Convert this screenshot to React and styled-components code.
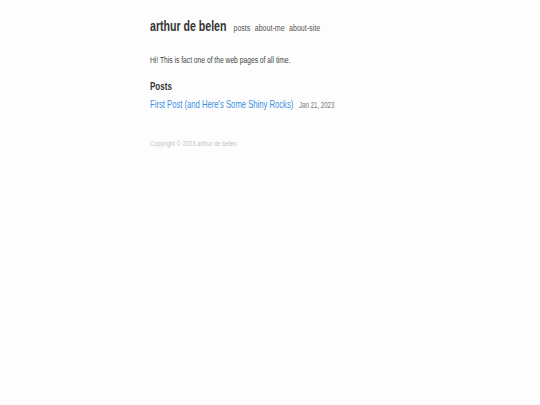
import styled, { createGlobalStyle } from "styled-components";

const GlobalStyle = createGlobalStyle`
  html, body {
    margin: 0;
    padding: 0;
    background: #fdfdfd;
  }
  body {
    font-family: "Liberation Sans", Arial, sans-serif;
    color: #333;
  }
`;

// narrow column, the site's font is a condensed sans
const Page = styled.div`
  width: 240px;
  margin: 0 auto;
  padding-top: 17px;
`;

const Condensed = styled.div`
  width: 328px;
  transform: scaleX(0.73);
  transform-origin: 0 0;
`;

const Header = styled.header`
  display: flex;
  align-items: baseline;
  gap: 9.6px;
  line-height: 18px;
`;

const SiteTitle = styled.a`
  font-size: 14.5px;
  font-weight: 700;
  color: #333;
  text-decoration: none;
  white-space: nowrap;
`;

const Nav = styled.nav`
  display: flex;
  gap: 6px;
`;

const NavLink = styled.a`
  font-size: 9.7px;
  color: #555;
  text-decoration: none;
  white-space: nowrap;
`;

const Intro = styled.p`
  font-size: 9.2px;
  line-height: 12px;
  margin: 17px 0 0;
  color: #444;
`;

const SectionTitle = styled.h2`
  font-size: 11px;
  line-height: 14px;
  font-weight: 700;
  margin: 13px 0 0;
  color: #333;
`;

const PostRow = styled.div`
  display: flex;
  align-items: baseline;
  gap: 8.2px;
  margin-top: 4px;
  line-height: 14px;
  white-space: nowrap;
`;

const PostLink = styled.a`
  font-size: 10.5px;
  color: #3a8ee6;
  text-decoration: none;
`;

const PostDate = styled.span`
  font-size: 8.3px;
  color: #777;
`;

const Footer = styled.footer`
  font-size: 8px;
  line-height: 10px;
  color: #c2c2c2;
  margin-top: 27px;
`;

export default function App() {
  return (
    <>
      <GlobalStyle />
      <Page>
        <Condensed>
          <Header>
            <SiteTitle href="#">arthur de belen</SiteTitle>
            <Nav>
              <NavLink href="#">posts</NavLink>
              <NavLink href="#">about-me</NavLink>
              <NavLink href="#">about-site</NavLink>
            </Nav>
          </Header>
          <Intro>Hi! This is fact one of the web pages of all time.</Intro>
          <SectionTitle>Posts</SectionTitle>
          <PostRow>
            <PostLink href="#">First Post (and Here's Some Shiny Rocks)</PostLink>
            <PostDate>Jan 21, 2023</PostDate>
          </PostRow>
          <Footer>Copyright © 2023 arthur de belen</Footer>
        </Condensed>
      </Page>
    </>
  );
}
